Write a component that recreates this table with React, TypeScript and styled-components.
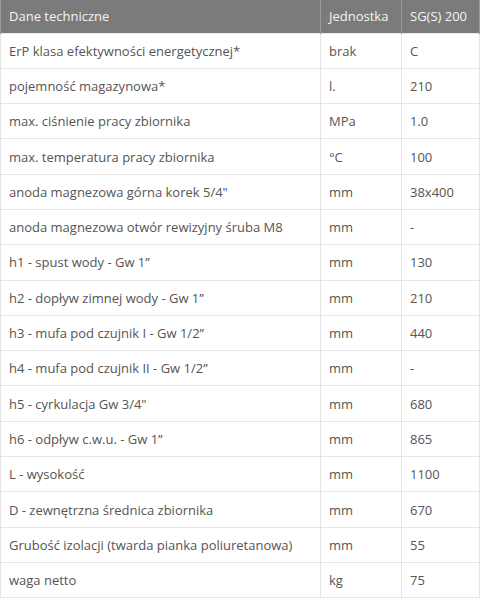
import React from "react";
import styled, { createGlobalStyle } from "styled-components";

const Global = createGlobalStyle`
  html, body { margin: 0; padding: 0; background: #ffffff; overflow: hidden; }
  body { font-family: "Open Sans", "Liberation Sans", sans-serif; }
`;

const Table = styled.table`
  width: 479px;
  border-collapse: collapse;
  table-layout: fixed;
  font-family: "Open Sans", "Liberation Sans", sans-serif;
  font-size: 13px;
  color: #555555;
`;

const HeadRow = styled.tr`
  height: 33px;
  background: #7b7b7b;
`;

const Th = styled.th<{ $w: number }>`
  box-sizing: border-box;
  width: ${(p) => p.$w}px;
  text-align: left;
  font-weight: 400;
  color: #f4f4f4;
  padding: 0 0 0 8px;
  border-left: 1px solid #9a9a9a;
  border-right: 1px solid #9a9a9a;
  white-space: nowrap;
`;

const Row = styled.tr`
  height: 35.3px;
`;

const Td = styled.td`
  padding: 0 0 0 8px;
  border: 1px solid #e6e6e6;
  white-space: nowrap;
`;

const rows: [string, string, string][] = [
  ["ErP klasa efektywności energetycznej*", "brak", "C"],
  ["pojemność magazynowa*", "l.", "210"],
  ["max. ciśnienie pracy zbiornika", "MPa", "1.0"],
  ["max. temperatura pracy zbiornika", "°C", "100"],
  ["anoda magnezowa górna korek 5/4\"", "mm", "38x400"],
  ["anoda magnezowa otwór rewizyjny śruba M8", "mm", "-"],
  ["h1 - spust wody - Gw 1”", "mm", "130"],
  ["h2 - dopływ zimnej wody - Gw 1”", "mm", "210"],
  ["h3 - mufa pod czujnik I - Gw 1/2”", "mm", "440"],
  ["h4 - mufa pod czujnik II - Gw 1/2”", "mm", "-"],
  ["h5 - cyrkulacja Gw 3/4\"", "mm", "680"],
  ["h6 - odpływ c.w.u. - Gw 1”", "mm", "865"],
  ["L - wysokość", "mm", "1100"],
  ["D - zewnętrzna średnica zbiornika", "mm", "670"],
  ["Grubość izolacji (twarda pianka poliuretanowa)", "mm", "55"],
  ["waga netto", "kg", "75"],
];

export default function App() {
  return (
    <>
      <Global />
      <Table>
        <thead>
          <HeadRow>
            <Th $w={320}>Dane techniczne</Th>
            <Th $w={81}>Jednostka</Th>
            <Th $w={78}>SG(S) 200</Th>
          </HeadRow>
        </thead>
        <tbody>
          {rows.map((r, i) => (
            <Row key={i}>
              <Td>{r[0]}</Td>
              <Td>{r[1]}</Td>
              <Td>{r[2]}</Td>
            </Row>
          ))}
        </tbody>
      </Table>
    </>
  );
}
